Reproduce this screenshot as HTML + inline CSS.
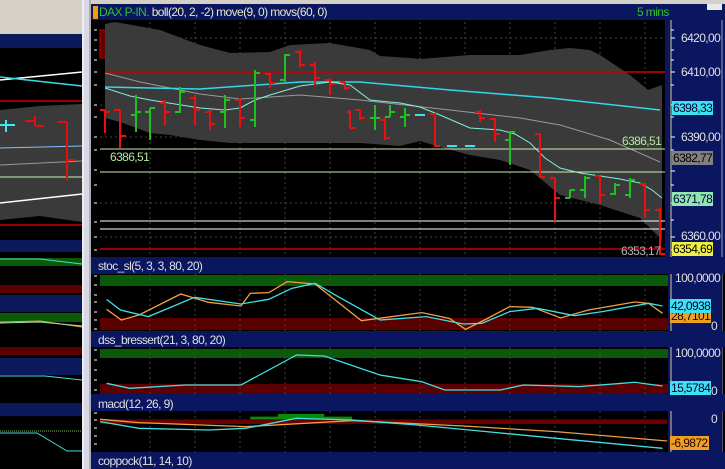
<!DOCTYPE html><html><head><style>
body{margin:0;width:725px;height:469px;overflow:hidden;background:#000;font-family:"Liberation Sans",sans-serif}
.t{position:absolute;font-size:12px;white-space:nowrap;letter-spacing:-0.6px}
</style></head><body>
<svg width="725" height="469" style="position:absolute;left:0;top:0" font-family="Liberation Sans, sans-serif">
<rect x="0" y="0" width="82" height="34" fill="#d4d0c8"/>
<rect x="0" y="34" width="82" height="14" fill="#0a1a5c"/>
<rect x="0" y="48" width="82" height="192" fill="#000"/>
<polygon points="0,110 40,106 82,104 82,222 40,216 0,220" fill="#3a3a3a"/>
<line x1="0" y1="80" x2="82" y2="72" stroke="#fff" stroke-width="1.5"/>
<line x1="0" y1="77" x2="82" y2="86" stroke="#40d8e0" stroke-width="1.5"/>
<line x1="0" y1="101" x2="82" y2="101" stroke="#c00" stroke-width="1.5"/>
<line x1="0" y1="148" x2="82" y2="146" stroke="#80c0ff"/>
<line x1="0" y1="165" x2="82" y2="161" stroke="#999"/>
<line x1="0" y1="177" x2="82" y2="177" stroke="#b0ffb0"/>
<line x1="0" y1="203" x2="82" y2="194" stroke="#fff" stroke-width="1.5"/>
<line x1="0" y1="225" x2="82" y2="225" stroke="#c00" stroke-width="1.5"/>
<path d="M0 125H15M6 120V132" stroke="#40e8f0" stroke-width="2"/>
<path d="M25 121H35M35 116V126M35 126H44" stroke="#e01010" stroke-width="2"/>
<path d="M57 122H67M67 122V180M67 160H75" stroke="#e01010" stroke-width="2"/>
<rect x="0" y="240" width="82" height="12" fill="#0a1a5c"/>
<rect x="0" y="258" width="82" height="8" fill="#0a5a0a"/>
<line x1="0" y1="259" x2="40" y2="259" stroke="#40e0d0"/><line x1="40" y1="259" x2="82" y2="264" stroke="#40e0d0"/>
<rect x="0" y="285" width="82" height="8" fill="#5a0000"/>
<rect x="0" y="295" width="82" height="17" fill="#0a1a5c"/>
<rect x="0" y="313" width="82" height="9" fill="#0a5a0a"/>
<path d="M0 322L40 321L82 327" stroke="#e8a040" fill="none"/><path d="M0 323L40 322L82 326" stroke="#9fe0a0" fill="none"/>
<rect x="0" y="347" width="82" height="8" fill="#5a0000"/>
<rect x="0" y="358" width="82" height="17" fill="#0a1a5c"/>
<path d="M0 376L45 376L82 380" stroke="#40e0d0" fill="none"/>
<rect x="0" y="403" width="82" height="13" fill="#0a1a5c"/>
<line x1="0" y1="431" x2="82" y2="431" stroke="#80c060" stroke-dasharray="1 1"/>
<path d="M0 433L37 433L67 451L82 451" stroke="#40e0d0" fill="none"/>
<rect x="82" y="0" width="9" height="469" fill="#d8d8e4"/>
<line x1="83" y1="0" x2="83" y2="469" stroke="#fff"/>
<line x1="90" y1="0" x2="90" y2="469" stroke="#808080"/>
<rect x="91" y="0" width="634" height="4" fill="#d4d0c8"/>
<rect x="91" y="4" width="634" height="16" fill="#0a1660"/>
<rect x="93" y="6" width="5" height="13" fill="#f0a000"/>
<rect x="707" y="4" width="15" height="6" fill="#e8e8e8"/>
<rect x="91" y="20" width="579" height="237" fill="#000"/>
<g stroke="#444" stroke-dasharray="2 3">
<line x1="150" y1="22" x2="150" y2="256"/><line x1="195" y1="22" x2="195" y2="256"/><line x1="240" y1="22" x2="240" y2="256"/><line x1="285" y1="22" x2="285" y2="256"/><line x1="330" y1="22" x2="330" y2="256"/><line x1="375" y1="22" x2="375" y2="256"/><line x1="420" y1="22" x2="420" y2="256"/><line x1="465" y1="22" x2="465" y2="256"/><line x1="510" y1="22" x2="510" y2="256"/><line x1="555" y1="22" x2="555" y2="256"/><line x1="600" y1="22" x2="600" y2="256"/><line x1="645" y1="22" x2="645" y2="256"/>
<line x1="100" y1="38" x2="665" y2="38"/><line x1="100" y1="105" x2="665" y2="105"/><line x1="100" y1="137" x2="665" y2="137"/><line x1="100" y1="203" x2="665" y2="203"/><line x1="100" y1="237" x2="665" y2="237"/>
</g>
<g stroke="#fff" stroke-width="1"><path d="M94 30h3M94 40h3M94 50h3M94 60h3M94 72h3M94 85h3M94 105h3M94 117h3M94 137h3M94 150h3M94 170h3M94 185h3M94 203h3M94 222h3M94 237h3M94 250h3"/></g>
<rect x="100" y="30" width="6" height="28" fill="#600000" stroke="#c00000"/>
<polygon points="105,24 115,22 160,30 200,45 230,53 270,52 290,45 330,43 370,50 380,56 410,58 420,59 470,55 520,55 550,50 570,48 590,50 600,55 630,75 648,90 662,85 662,240 640,218 600,205 560,195 530,170 500,160 470,155 440,147 420,141 400,146 360,143 330,143 280,143 230,143 200,140 170,135 150,133 120,122 105,118" fill="#3a3a3a"/>
<polyline points="105,73 140,82 200,94 240,99 300,95 360,100 450,110 520,118 560,125 610,140 660,162" fill="none" stroke="#999"/>
<polyline points="105,87 200,89 300,82 360,82 450,90 550,98 660,110" fill="none" stroke="#30d8e8" stroke-width="1.5"/>
<polyline points="105,88 130,96 150,100 175,104 200,108 225,110 240,108 255,100 270,95 300,86 330,82 350,85 370,100 400,103 420,107 440,115 470,128 500,130 515,134 530,143 545,158 560,168 580,173 600,176 620,179 640,183 652,190 662,198" fill="none" stroke="#80f0e0"/>
<line x1="105" y1="72" x2="665" y2="72" stroke="#c00" stroke-width="1.5"/>
<line x1="100" y1="149" x2="665" y2="149" stroke="#c8f0b0"/>
<line x1="100" y1="172" x2="665" y2="172" stroke="#c8f0b0"/>
<line x1="100" y1="221" x2="665" y2="221" stroke="#fff"/>
<line x1="100" y1="229" x2="665" y2="229" stroke="#fff"/>
<line x1="100" y1="249" x2="665" y2="249" stroke="#c00" stroke-width="1.5"/>
<g stroke-width="2" fill="none">
<g stroke="#e81010">
<path d="M105 110V133M100 110h5M105 112h5"/><path d="M120 110V148M114 110h6M120 136h6"/><path d="M165 100V125M160 103h5M165 112h5"/><path d="M195 95V125M190 98h5M195 110h5"/><path d="M210 110V130M205 112h5M210 124h5"/><path d="M240 98V127M235 100h5M240 118h5"/><path d="M270 73V88M265 74h5M270 83h5"/><path d="M300 50V67M295 52h5M300 65h5"/><path d="M315 62V85M310 65h5M315 78h5"/><path d="M330 78V95M325 80h5M330 84h5"/><path d="M345 82V90M340 82h5M345 88h5"/><path d="M360 110V120M355 110h5M360 118h5"/><path d="M435 113V147M430 114h5M435 146h5"/><path d="M480 110V122M475 112h5M480 118h5"/><path d="M495 118V142M490 119h5M495 134h5"/><path d="M540 133V178M535 134h5M540 177h5"/><path d="M555 178V221M550 178h5M555 198h5"/><path d="M600 176V204M595 176h5M600 195h5"/><path d="M645 183V218M640 184h5M645 210h5"/><path d="M660 208V255M655 210h5M660 254h5"/>
<path d="M350 110V128M347 112h3M350 128h5"/><path d="M385 118V140M380 120h5M385 138h5"/>
</g>
<g stroke="#20c020">
<path d="M136 95V132M131 115h5M136 112h5"/><path d="M150 108V140M145 112h5M150 108h5"/><path d="M180 87V113M175 112h5M180 92h5"/><path d="M225 95V128M220 112h5M225 100h5"/><path d="M255 70V127M250 120h5M255 73h5"/><path d="M285 54V82M280 80h5M285 55h5"/><path d="M375 105V130M370 118h5M375 118h5"/><path d="M390 105V117M385 117h5M390 112h5"/><path d="M405 108V127M400 117h5M405 115h5"/><path d="M510 131V165M505 140h5M510 132h5"/><path d="M570 190V198M565 198h5M570 190h5"/><path d="M585 176V198M580 190h5M585 178h5"/><path d="M615 183V195M610 194h5M615 185h5"/><path d="M630 178V198M625 195h5M630 180h5"/>
</g>
<path d="M415 115h10M447 146h10M465 146h10" stroke="#40e0f0"/>
</g>
<rect x="665" y="20" width="60" height="237" fill="#0a1660"/>
<line x1="671" y1="20" x2="671" y2="257" stroke="#d8c890"/>
<line x1="722" y1="20" x2="722" y2="469" stroke="#a0a0b0"/>
<g stroke="#fff"><path d="M671 30h3M671 38h4M671 50h3M671 60h3M671 72h4M671 85h3M671 105h4M671 117h3M671 137h4M671 150h3M671 171h4M671 185h3M671 203h4M671 220h3M671 237h4M671 250h3"/></g>
<rect x="91" y="257" width="634" height="17" fill="#0a1660"/>
<rect x="91" y="274" width="577" height="57" fill="#000"/>
<rect x="100" y="275" width="568" height="11" fill="#0a5a0a"/>
<rect x="100" y="318" width="568" height="12" fill="#5a0000"/>
<rect x="91" y="331" width="634" height="16" fill="#0a1660"/>
<rect x="91" y="347" width="577" height="47" fill="#000"/>
<rect x="100" y="349" width="568" height="9" fill="#0a5a0a"/>
<rect x="100" y="384" width="568" height="10" fill="#5a0000"/>
<rect x="91" y="394" width="634" height="17" fill="#0a1660"/>
<rect x="91" y="411" width="577" height="41" fill="#000"/>
<rect x="91" y="452" width="634" height="17" fill="#0a1660"/>
<g stroke="#444" stroke-dasharray="2 3">
<path d="M150 274V331M195 274V331M240 274V331M285 274V331M330 274V331M375 274V331M420 274V331M465 274V331M510 274V331M555 274V331M600 274V331M645 274V331"/>
<path d="M150 347V394M195 347V394M240 347V394M285 347V394M330 347V394M375 347V394M420 347V394M465 347V394M510 347V394M555 347V394M600 347V394M645 347V394"/>
<path d="M150 411V452M195 411V452M240 411V452M285 411V452M330 411V452M375 411V452M420 411V452M465 411V452M510 411V452M555 411V452M600 411V452M645 411V452"/>
</g>
<g stroke="#fff"><path d="M94 276h3M94 285h3M94 295h3M94 302h3M94 312h3M94 320h3M94 329h3M94 350h3M94 360h3M94 370h3M94 380h3M94 390h3M94 413h3M94 420h3M94 428h3M94 436h3M94 444h3"/></g>
<g transform="translate(0,250) scale(0.4633,0.3333)" fill="none" stroke-width="1.3">
<polyline vector-effect="non-scaling-stroke" stroke="#f0a040" points="230,178 262,210 300,195 390,132 450,157 520,168 540,130 580,128 620,95 680,102 780,212 910,188 970,205 1005,238 1050,207 1100,170 1150,172 1210,204 1270,180 1370,156 1400,160 1430,190"/>
<polyline vector-effect="non-scaling-stroke" stroke="#40e0e0" points="230,148 260,180 320,200 420,142 520,162 580,148 630,115 680,100 730,140 820,210 920,200 1000,222 1040,220 1100,185 1160,175 1240,197 1300,185 1400,160 1430,168"/>
<polyline vector-effect="non-scaling-stroke" stroke="#40e0e0" points="230,400 280,415 400,405 520,405 640,315 700,318 820,375 910,395 960,420 1080,420 1130,405 1250,410 1370,397 1430,408"/>
<path stroke="none" fill="#6a0000" d="M216 508H1440V522H216Z"/>
<path stroke="none" fill="#0a8a0a" d="M540 500H760V508H540ZM600 492H700V500H600Z"/>
<polyline vector-effect="non-scaling-stroke" stroke="#f0a040" points="216,508 300,518 530,530 760,512 1000,528 1200,545 1440,573"/>
<polyline vector-effect="non-scaling-stroke" stroke="#40e0e0" points="216,515 300,535 450,540 530,535 640,505 760,510 900,525 1050,545 1200,565 1430,595"/>
</g>
<rect x="668" y="274" width="54" height="57" fill="#0a1660"/><line x1="671" y1="274" x2="671" y2="331" stroke="#d8c890"/>
<rect x="668" y="347" width="54" height="47" fill="#0a1660"/><line x1="671" y1="347" x2="671" y2="394" stroke="#d8c890"/>
<rect x="668" y="411" width="54" height="41" fill="#0a1660"/><line x1="671" y1="411" x2="671" y2="452" stroke="#d8c890"/>
</svg>
<div class="t" style="left:99px;top:5px"><span style="color:#30c030">DAX P-IN.</span> <span style="color:#e8e8c0">boll(20, 2, -2) move(9, 0) movs(60, 0)</span></div>
<div class="t" style="left:637px;top:5px;color:#30c030">5 mins</div>
<div class="t" style="left:110px;top:150px;color:#b0e8a0">6386,51</div>
<div class="t" style="left:622px;top:134px;color:#b0e8a0">6386,51</div>
<div class="t" style="left:621px;top:244px;color:#b0b0b0">6353,17</div>
<div class="t" style="left:681px;top:31px;color:#e0e0e0">6420,00</div>
<div class="t" style="left:681px;top:65px;color:#e0e0e0">6410,00</div>
<div class="t" style="left:681px;top:130px;color:#e0e0e0">6390,00</div>
<div class="t" style="left:681px;top:229px;color:#e0e0e0">6360,00</div>
<div class="t" style="left:672px;top:101px;background:#40e0f0;color:#003;padding:0 1px">6398,33</div>
<div class="t" style="left:672px;top:151px;background:#808080;color:#000;padding:0 1px">6382,77</div>
<div class="t" style="left:672px;top:192px;background:#90e8b0;color:#003;padding:0 1px">6371,78</div>
<div class="t" style="left:672px;top:242px;background:#f0f040;color:#000;padding:0 1px">6354,69</div>
<div class="t" style="left:98px;top:259px;color:#e0e0e0">stoc_sl(5, 3, 3, 80, 20)</div>
<div class="t" style="left:98px;top:333px;color:#e0e0e0">dss_bressert(21, 3, 80, 20)</div>
<div class="t" style="left:98px;top:397px;color:#e0e0e0">macd(12, 26, 9)</div>
<div class="t" style="left:98px;top:454px;color:#e0e0e0">coppock(11, 14, 10)</div>
<div class="t" style="left:675px;top:271px;color:#e0e0e0">100,0000</div>
<div class="t" style="left:670px;top:309px;background:#f0a020;color:#200;padding:0 1px">28,7101</div>
<div class="t" style="left:670px;top:299px;background:#40e0f0;color:#003;padding:0 1px">42,0938</div>
<div class="t" style="left:711px;top:319px;color:#e0e0e0">0</div>
<div class="t" style="left:675px;top:346px;color:#e0e0e0">100,0000</div>
<div class="t" style="left:670px;top:381px;background:#40e0f0;color:#003;padding:0 1px">15,5784</div>
<div class="t" style="left:711px;top:384px;color:#e0e0e0">0</div>
<div class="t" style="left:711px;top:412px;color:#e0e0e0">0</div>
<div class="t" style="left:670px;top:436px;background:#f0a020;color:#200;padding:0 1px">-6,9872</div>
</body></html>
